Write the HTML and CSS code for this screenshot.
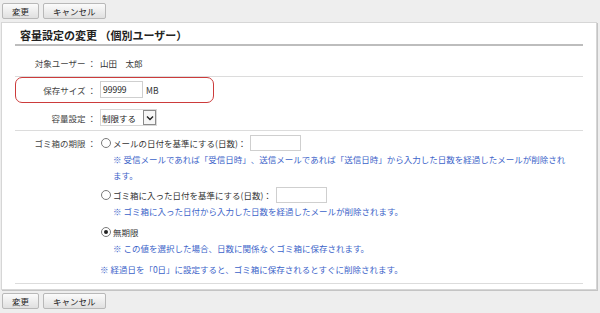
FILE: index.html
```html
<!DOCTYPE html>
<html lang="ja">
<head>
<meta charset="utf-8">
<title>容量設定の変更</title>
<link rel="stylesheet" href="styles.css">
</head>
<body>
<div class="btnbar">
  <button class="btn">変更</button>
  <button class="btn">キャンセル</button>
</div>
<div class="panel">
  <h1 class="title">容量設定の変更 （個別ユーザー）</h1>
  <div class="row row-user">
    <div class="label">対象ユーザー ：</div>
    <div class="value">山田　太郎</div>
  </div>
  <div class="row row-size">
    <div class="highlight">
      <div class="label">保存サイズ ：</div>
      <div class="value inline">
        <span class="textbox size-box">99999</span>
        <span class="unit">MB</span>
      </div>
    </div>
  </div>
  <div class="row row-limit">
    <div class="label">容量設定 ：</div>
    <div class="value inline">
      <span class="select">
        <span class="select-text">制限する</span>
        <span class="select-arrow">
          <svg width="8" height="6" viewBox="0 0 8 6"><path d="M1 1.5 L4 4.5 L7 1.5" fill="none" stroke="#222" stroke-width="1.4"/></svg>
        </span>
      </span>
    </div>
  </div>
  <div class="row row-trash">
    <div class="label">ゴミ箱の期限 ：</div>
    <div class="value options">
      <div class="option">
        <div class="opt-line"><span class="radio"></span>メールの日付を基準にする(日数)：<span class="textbox days-box"></span></div>
        <p class="note">※ 受信メールであれば「受信日時」、送信メールであれば「送信日時」から入力した日数を経過したメールが削除されます。</p>
      </div>
      <div class="option opt2">
        <div class="opt-line"><span class="radio"></span>ゴミ箱に入った日付を基準にする(日数)：<span class="textbox days-box"></span></div>
        <p class="note">※ ゴミ箱に入った日付から入力した日数を経過したメールが削除されます。</p>
      </div>
      <div class="option opt3">
        <div class="opt-line"><span class="radio checked"></span>無期限</div>
        <p class="note">※ この値を選択した場合、日数に関係なくゴミ箱に保存されます。</p>
      </div>
      <p class="note final">※ 経過日を「0日」に設定すると、ゴミ箱に保存されるとすぐに削除されます。</p>
    </div>
  </div>
</div>
<div class="btnbar bottom">
  <button class="btn">変更</button>
  <button class="btn">キャンセル</button>
</div>
</body>
</html>
```

FILE: styles.css
```css
* { box-sizing: border-box; }
html, body {
  margin: 0;
  padding: 0;
  background: #eeeeee;
  font-family: "Noto Sans CJK JP", "Noto Sans", sans-serif;
  font-size: 8.5px;
  color: #333;
  text-spacing-trim: space-all;
}
.btnbar {
  display: flex;
  gap: 4px;
  padding: 3px 2px 0;
  height: 22px;
}
.btnbar.bottom {
  padding-top: 3px;
}
.btn {
  height: 16px;
  padding: 0 9px;
  margin: 0;
  font-family: inherit;
  font-size: 8.5px;
  line-height: 14px;
  color: #222;
  border: 1px solid #b8b8b8;
  border-radius: 2px;
  background: linear-gradient(#fbfbfb, #e0e0e0);
}
.panel {
  margin: 0 3px 0 1px;
  background: #fff;
  border: 1px solid #d6d6d6;
  box-shadow: 1px 1px 0 #c4c4c4;
  padding: 0 13px 5px 13px;
  height: 268px;
}
.title {
  margin: 0;
  padding: 4px 0 1px 5px;
  font-size: 11px;
  line-height: 16px;
  font-weight: bold;
  color: #222;
  border-bottom: 2px solid #bdbdbd;
}
.row {
  display: flex;
  border-bottom: 1px solid #dcdcdc;
}
.label {
  width: 85px;
  flex: none;
  text-align: right;
  padding-right: 4px;
  color: #444;
  line-height: 16px;
}
.value {
  flex: 1;
  line-height: 16px;
  color: #333;
}
.value.inline {
  display: flex;
  align-items: center;
}
.row-user {
  padding: 9px 0 5px;
}
.row-size {
  padding: 0 0 1px;
  border-bottom-color: transparent;
}
.highlight {
  display: flex;
  align-items: center;
  width: 199px;
  height: 26px;
  border: 1px solid #cc3b3b;
  border-radius: 7px;
  padding-bottom: 1px;
}
.highlight .label {
  width: 84px;
}
.textbox {
  display: inline-block;
  height: 17px;
  border: 1px solid #cfcfcf;
  background: #fff;
  line-height: 15px;
  padding-left: 2px;
  color: #222;
}
.size-box {
  width: 43px;
}
.unit {
  margin-left: 3px;
}
.row-limit {
  padding: 4px 0 4px;
  align-items: center;
}
.select {
  display: inline-flex;
  align-items: center;
  justify-content: space-between;
  width: 57px;
  height: 17px;
  border: 1px solid #d8d8d8;
  padding-left: 1px;
  color: #222;
}
.select-arrow {
  display: flex;
  align-items: center;
  justify-content: center;
  width: 13px;
  height: 15px;
  border: 1px solid #8a8a8a;
  background: #f6f6f6;
}
.row-trash {
  padding: 4px 0 6px;
}
.options {
  padding-right: 14px;
}
.opt-line {
  display: flex;
  align-items: center;
  height: 16px;
  color: #333;
}
.radio {
  width: 10px;
  height: 10px;
  border: 1px solid #7a7a7a;
  border-radius: 50%;
  background: #fff;
  margin: 0 2px 0 1px;
  display: inline-flex;
  align-items: center;
  justify-content: center;
  flex: none;
}
.radio.checked::after {
  content: "";
  width: 4px;
  height: 4px;
  border-radius: 50%;
  background: #222;
}
.days-box {
  width: 51px;
  height: 16px;
  margin-left: 4px;
}
.note {
  margin: 0;
  padding-left: 13px;
  line-height: 16px;
  color: #3b63c9;
}
.opt2 {
  margin-top: 4px;
}
.opt3 {
  margin-top: 5px;
}
.note.final {
  margin-top: 5px;
  padding-left: 0;
}
```
